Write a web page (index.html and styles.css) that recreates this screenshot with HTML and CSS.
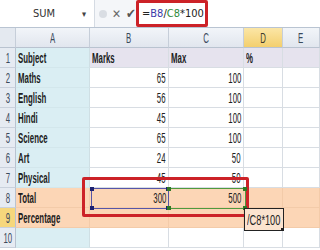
FILE: index.html
```html
<!DOCTYPE html>
<html>
<head>
<meta charset="utf-8">
<link rel="stylesheet" href="styles.css">
</head>
<body>
<div class="fbar">
  <div class="namebox"><span class="nm">SUM</span><span class="dd">&#9662;</span></div>
  <div class="tools">
    <span class="dot"></span>
    <span class="x">&#x2715;</span>
    <span class="chk">&#x2714;</span>
  </div>
  <div class="formula">=<span class="rb">B8</span>/<span class="rg">C8</span>*100</div>
  <div class="rest"></div>
</div>
<div class="sheet">
  <div class="grid">
    <div class="hd corner"></div><div class="hd"><span class="t">A</span></div><div class="hd"><span class="t">B</span></div><div class="hd"><span class="t">C</span></div><div class="hd act"><span class="t">D</span></div><div class="hd"><span class="t">E</span></div>

    <div class="rn"><span class="t">1</span></div><div class="c ca b"><span class="t">Subject</span></div><div class="c r1 b"><span class="t">Marks</span></div><div class="c r1 b"><span class="t">Max</span></div><div class="c r1 b"><span class="t">%</span></div><div class="c r1"></div>
    <div class="rn"><span class="t">2</span></div><div class="c ca b"><span class="t">Maths</span></div><div class="c n"><span class="t">65</span></div><div class="c n"><span class="t">100</span></div><div class="c"></div><div class="c"></div>
    <div class="rn"><span class="t">3</span></div><div class="c ca b"><span class="t">English</span></div><div class="c n"><span class="t">56</span></div><div class="c n"><span class="t">100</span></div><div class="c"></div><div class="c"></div>
    <div class="rn"><span class="t">4</span></div><div class="c ca b"><span class="t">Hindi</span></div><div class="c n"><span class="t">45</span></div><div class="c n"><span class="t">100</span></div><div class="c"></div><div class="c"></div>
    <div class="rn"><span class="t">5</span></div><div class="c ca b"><span class="t">Science</span></div><div class="c n"><span class="t">65</span></div><div class="c n"><span class="t">100</span></div><div class="c"></div><div class="c"></div>
    <div class="rn"><span class="t">6</span></div><div class="c ca b"><span class="t">Art</span></div><div class="c n"><span class="t">24</span></div><div class="c n"><span class="t">50</span></div><div class="c"></div><div class="c"></div>
    <div class="rn"><span class="t">7</span></div><div class="c ca b"><span class="t">Physical</span></div><div class="c n"><span class="t">45</span></div><div class="c n"><span class="t">50</span></div><div class="c"></div><div class="c"></div>
    <div class="rn"><span class="t">8</span></div><div class="c pe b"><span class="t">Total</span></div><div class="c pe n"><span class="t">300</span></div><div class="c pe n"><span class="t">500</span></div><div class="c pe"></div><div class="c pe"></div>
    <div class="rn act"><span class="t">9</span></div><div class="c pe b"><span class="t">Percentage</span></div><div class="c pe"></div><div class="c pe"></div><div class="c pe"></div><div class="c pe"></div>
    <div class="rn"><span class="t">10</span></div><div class="c ca"></div><div class="c"></div><div class="c"></div><div class="c"></div><div class="c"></div>
  </div>
  <div class="redbox"></div>
  <div class="rng blue"><i class="h tl"></i><i class="h tr"></i><i class="h bl"></i><i class="h br"></i></div>
  <div class="rng green"><i class="h tl"></i><i class="h tr"></i><i class="h bl"></i><i class="h br"></i></div>
  <div class="edit"><span class="t">/C8*100</span><i class="fill"></i></div>
</div>
</body>
</html>
```
FILE: styles.css
```css
* { box-sizing: border-box; }
html, body { margin: 0; padding: 0; background: #fff; }
body {
  width: 320px; height: 250px; overflow: hidden;
  font-family: "Liberation Sans", Arial, sans-serif;
  font-size: 14px; color: #1a1a1a;
}
.t { display: inline-block; transform: scaleX(0.56); transform-origin: left center; white-space: nowrap; }
.fbar {
  display: flex; height: 28px; border-bottom: 1px solid #b9c4d2;
  background: #fff; align-items: stretch;
  font-family: "DejaVu Sans Condensed", "Liberation Sans", sans-serif; font-size: 11px;
}
.namebox {
  width: 95px; display: flex; align-items: center;
  border-right: 1px solid #d5dbe3; background: #fff;
}
.nm { flex: 1; text-align: center; color: #333; padding-left: 6px; }
.dd { width: 12px; font-size: 9px; color: #444; }
.tools {
  width: 41px; display: flex; align-items: center; gap: 5px; padding-left: 4px;
  background: #f4f6f9; color: #555;
}
.dot { width: 8px; height: 8px; border-radius: 50%; background: #d9dde3; }
.x { font-size: 12px; color: #666; font-weight: bold; }
.chk { font-size: 13px; color: #555; }
.formula {
  width: 72px; border: 3px solid #cc2228; border-radius: 2px;
  display: flex; align-items: center; padding-left: 3px; color: #222;
}
.rb { color: #3a3aa8; }
.rg { color: #2e8a3a; }
.rest { flex: 1; }

.sheet { position: relative; }
.grid {
  display: grid;
  grid-template-columns: 16px 74px 79px 75px 39px 37px;
  grid-auto-rows: 20px;
}
.hd {
  background: linear-gradient(#f2f5f9, #e1e6ee);
  border-right: 1px solid #c6ced9; border-bottom: 1px solid #b9c3d0;
  display: flex; align-items: center; justify-content: center; color: #3b4a5c;
}
.hd .t, .rn .t { transform-origin: center; }
.hd.act { background: linear-gradient(#fbe6a6, #f3cf6e); color: #3a3a2a; }
.corner { background: #e4e9f0; }
.rn {
  background: #e6ebf2; border-right: 1px solid #b9c3d0; border-bottom: 1px solid #c9d1dc;
  display: flex; align-items: center; justify-content: center; color: #3b4a5c;
}
.rn.act { background: #f6d77c; }
.c {
  border-right: 1px solid #d8dde3; border-bottom: 1px solid #d8dde3;
  display: flex; align-items: center; padding: 0 2px; white-space: nowrap;
  background: #fff;
}
.ca { background: #daeef3; border-right-color: #cfdfe4; border-bottom-color: #d3e7ec; }
.r1 { background: #e6e3ee; }
.pe { background: #fcd6b6; border-bottom-color: #f3cba9; border-right-color: #f3cba9; }
.b { font-weight: bold; color: #1c1c1c; }
.n { justify-content: flex-end; color: #222; }
.n .t { transform-origin: right center; }

.redbox {
  position: absolute; left: 82px; top: 149px; width: 167px; height: 40px;
  border: 3px solid #cc2228; border-radius: 2px;
}
.rng { position: absolute; top: 160px; height: 21px; }
.blue { left: 91px; width: 78px; border: 1px solid #5656a8; }
.green { left: 169px; width: 77px; border: 1px solid #4f9a3e; border-left: none; }
.h { position: absolute; width: 4px; height: 4px; }
.blue .h { background: #1e2270; }
.green .h { background: #2f7a26; }
.tl { left: -2px; top: -2px; }
.tr { right: -2px; top: -2px; }
.bl { left: -2px; bottom: -2px; }
.br { right: -2px; bottom: -2px; }
.edit {
  position: absolute; left: 244px; top: 180px; width: 40px; height: 23px;
  border: 1px solid #222; background: #fbe3cf;
  display: flex; align-items: center; padding-left: 2px; white-space: nowrap; overflow: hidden; color: #222;
}
.edit .t { transform: scaleX(0.66); }
.fill { position: absolute; right: -1px; bottom: -1px; width: 3px; height: 3px; background: #222; }
```
